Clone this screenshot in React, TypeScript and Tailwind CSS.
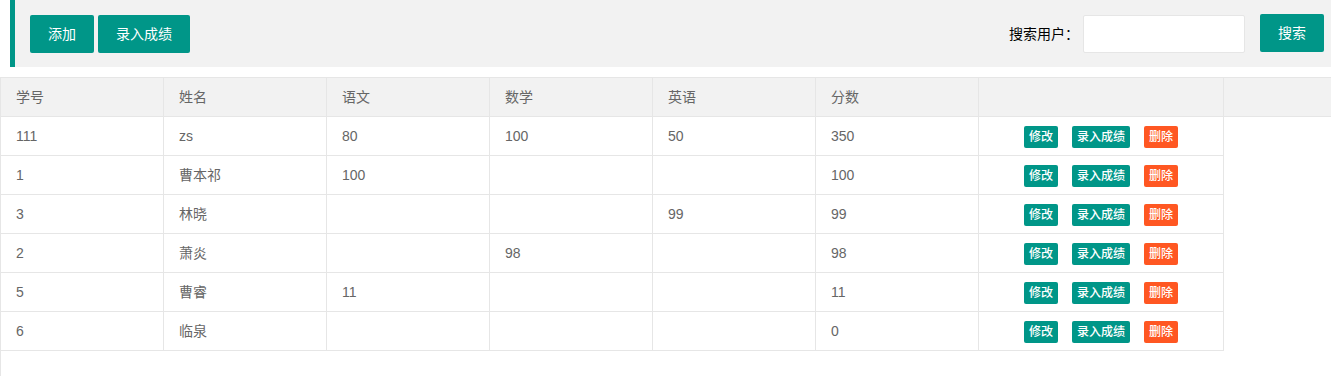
import React from "react";

const font = { fontFamily: '"Liberation Sans", "Noto Sans CJK SC", sans-serif' };

const columns = ["学号", "姓名", "语文", "数学", "英语", "分数"];

const rows = [
  ["111", "zs", "80", "100", "50", "350"],
  ["1", "曹本祁", "100", "", "", "100"],
  ["3", "林晓", "", "", "99", "99"],
  ["2", "萧炎", "", "98", "", "98"],
  ["5", "曹睿", "11", "", "", "11"],
  ["6", "临泉", "", "", "", "0"],
];

const Cell = ({ children }: { children?: React.ReactNode }) => (
  <div className="w-[163px] shrink-0 h-[38px] border-r border-[#e6e6e6] pl-[15px] flex items-center text-sm text-[#666]">
    {children}
  </div>
);

const XsButton = ({ label, danger }: { label: string; danger?: boolean }) => (
  <button
    className={`h-[22px] px-[5px] rounded-[2px] text-xs font-medium text-white leading-[22px] ${
      danger ? "bg-[#ff5722]" : "bg-[#009688]"
    }`}
  >
    {label}
  </button>
);

export default function App() {
  return (
    <div className="w-[1331px] h-[376px] bg-white overflow-hidden" style={font}>
      {/* toolbar */}
      <div className="ml-[10px] h-[67px] bg-[#f2f2f2] border-l-[5px] border-[#009688] flex items-center justify-between pl-[15px] pr-[7px]">
        <div className="flex gap-[4px]">
          <button className="h-[38px] px-[18px] rounded-[2px] bg-[#009688] text-white text-sm">添加</button>
          <button className="h-[38px] px-[18px] rounded-[2px] bg-[#009688] text-white text-sm">录入成绩</button>
        </div>
        <div className="flex items-center">
          <span className="text-sm text-black w-[74px]">搜索用户：</span>
          <input className="w-[162px] h-[38px] bg-white border border-[#e6e6e6] rounded-[2px] outline-none px-2 text-sm" />
          <button className="ml-[15px] -mt-[2px] h-[38px] w-[64px] rounded-[2px] bg-[#009688] text-white text-sm">搜索</button>
        </div>
      </div>

      {/* table */}
      <div className="mt-[10px] border-l border-[#e6e6e6] h-[300px]">
        <div className="flex bg-[#f2f2f2] border-y border-[#e6e6e6]">
          {columns.map((c) => (
            <Cell key={c}>{c}</Cell>
          ))}
          <div className="w-[245px] shrink-0 h-[38px] border-r border-[#e6e6e6]" />
          <div className="flex-1" />
        </div>
        {rows.map((r, i) => (
          <div key={i} className="flex w-[1223px] border-b border-[#e6e6e6]">
            {r.map((v, j) => (
              <Cell key={j}>{v}</Cell>
            ))}
            <div className="w-[245px] shrink-0 h-[38px] border-r border-[#e6e6e6] flex items-center justify-center gap-[14px] pt-px">
              <XsButton label="修改" />
              <XsButton label="录入成绩" />
              <XsButton label="删除" danger />
            </div>
          </div>
        ))}
      </div>
    </div>
  );
}
